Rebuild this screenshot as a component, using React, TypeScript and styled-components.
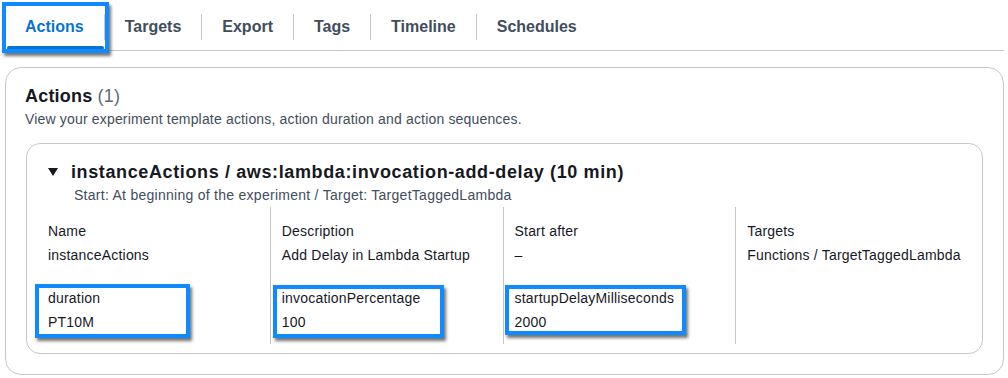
import React from 'react';
import styled, { createGlobalStyle } from 'styled-components';

const GlobalStyle = createGlobalStyle`
  body {
    margin: 0;
    background: #ffffff;
    font-family: "Liberation Sans", Arial, sans-serif;
    color: #16191f;
  }
`;

// Blue callout rectangles drawn over parts of the page
type BoxProps = { $left: number; $top: number; $width: number; $height: number };

const Callout = styled.div<BoxProps>`
  position: relative;

  &::after {
    content: '';
    position: absolute;
    left: ${(p) => p.$left}px;
    top: ${(p) => p.$top}px;
    width: ${(p) => p.$width}px;
    height: ${(p) => p.$height}px;
    box-sizing: border-box;
    border: 4px solid #0f8bff;
    box-shadow: 2px 3px 3px rgba(0, 0, 0, 0.55);
    pointer-events: none;
  }
`;

const Page = styled.div`
  padding: 0 4px 0 5px;
`;

const TabBar = styled.div`
  display: flex;
  align-items: center;
  padding-top: 4px;
  border-bottom: 1px solid #c6c6cd;
`;

const Tab = styled.div<{ $active?: boolean }>`
  position: relative;
  height: 46px;
  line-height: 46px;
  padding: 0 20px;
  font-size: 16px;
  font-weight: 700;
  color: ${(p) => (p.$active ? '#0972d3' : '#414d5c')};

  &::before {
    content: '';
    display: ${(p) => (p.$active ? 'block' : 'none')};
    position: absolute;
    left: 2px;
    right: 0;
    bottom: 0;
    height: 4px;
    border-radius: 2px;
    background: #0972d3;
  }
`;

const TabSeparator = styled.div`
  width: 1px;
  height: 26px;
  background: #c6c6cd;
`;

const Container = styled.section`
  margin-top: 16px;
  border: 1px solid #c6c6cd;
  border-radius: 16px;
  padding: 17px 20px 20px 19px;
`;

const Heading = styled.h2`
  margin: 0;
  font-size: 18px;
  line-height: 22px;
  font-weight: 700;
  letter-spacing: 0.2px;
  color: #16191f;
`;

const Count = styled.span`
  font-weight: 400;
  color: #5f6b7a;
`;

const Description = styled.p`
  margin: 2px 0 0;
  font-size: 14px;
  line-height: 20px;
  letter-spacing: 0.17px;
  color: #414d5c;
`;

const Card = styled.div`
  margin-top: 14px;
  margin-left: 1px;
  border: 1px solid #c6c6cd;
  border-radius: 14px;
  padding: 17px 14px 9px 10px;
`;

const CardHeader = styled.div`
  padding-left: 12px;
`;

const CardTitle = styled.div`
  display: flex;
  align-items: center;
  gap: 13px;
  font-size: 18px;
  line-height: 22px;
  font-weight: 700;
  letter-spacing: 0.62px;
  color: #16191f;
`;

const Caret = styled.svg`
  width: 10px;
  height: 8px;
  flex: none;
  margin-left: -1px;
`;

const CardSubtitle = styled.div`
  margin-top: 2px;
  padding-left: 25px;
  font-size: 14px;
  line-height: 20px;
  letter-spacing: 0.27px;
  color: #414d5c;
`;

const Columns = styled.div`
  display: grid;
  grid-template-columns: repeat(4, 1fr);
  margin-top: 2px;
`;

const Column = styled.div<{ $first?: boolean }>`
  border-left: ${(p) => (p.$first ? 'none' : '1px solid #c6c6cd')};
  padding: 14px 10px 12px 11px;
  display: flex;
  flex-direction: column;
  gap: 23px;
  min-width: 0;
`;

const Pair = styled.div`
  display: flex;
  flex-direction: column;
  gap: 4px;
  font-size: 14px;
  line-height: 20px;
  letter-spacing: 0.2px;
  white-space: nowrap;
  color: #16191f;
`;

type Field = { label: string; value: string };
type Col = { fields: Field[]; box?: BoxProps };

const columns: Col[] = [
  {
    fields: [
      { label: 'Name', value: 'instanceActions' },
      { label: 'duration', value: 'PT10M' },
    ],
    box: { $left: -13, $top: -4, $width: 155, $height: 54 },
  },
  {
    fields: [
      { label: 'Description', value: 'Add Delay in Lambda Startup' },
      { label: 'invocationPercentage', value: '100' },
    ],
    box: { $left: -9, $top: -3, $width: 171, $height: 53 },
  },
  {
    fields: [
      { label: 'Start after', value: '–' },
      { label: 'startupDelayMilliseconds', value: '2000' },
    ],
    box: { $left: -10, $top: -3, $width: 181, $height: 50 },
  },
  {
    fields: [{ label: 'Targets', value: 'Functions / TargetTaggedLambda' }],
  },
];

const tabs = ['Targets', 'Export', 'Tags', 'Timeline', 'Schedules'];

const FieldPair = ({ field }: { field: Field }) => (
  <Pair>
    <span>{field.label}</span>
    <span>{field.value}</span>
  </Pair>
);

export default function App() {
  return (
    <>
      <GlobalStyle />
      <Page>
        <TabBar>
          <Callout $left={-3} $top={-2} $width={107} $height={51}>
            <Tab $active>Actions</Tab>
          </Callout>
          {tabs.map((t) => (
            <React.Fragment key={t}>
              <TabSeparator />
              <Tab>{t}</Tab>
            </React.Fragment>
          ))}
        </TabBar>

        <Container>
          <Heading>
            Actions <Count>(1)</Count>
          </Heading>
          <Description>View your experiment template actions, action duration and action sequences.</Description>

          <Card>
            <CardHeader>
              <CardTitle>
                <Caret viewBox="0 0 10 8">
                  <path d="M0 0 L10 0 L5 8 Z" fill="#16191f" />
                </Caret>
                instanceActions / aws:lambda:invocation-add-delay (10 min)
              </CardTitle>
              <CardSubtitle>Start: At beginning of the experiment / Target: TargetTaggedLambda</CardSubtitle>
            </CardHeader>

            <Columns>
              {columns.map((col, i) => (
                <Column key={i} $first={i === 0}>
                  <FieldPair field={col.fields[0]} />
                  {col.fields[1] && col.box && (
                    <Callout {...col.box}>
                      <FieldPair field={col.fields[1]} />
                    </Callout>
                  )}
                </Column>
              ))}
            </Columns>
          </Card>
        </Container>
      </Page>
    </>
  );
}
